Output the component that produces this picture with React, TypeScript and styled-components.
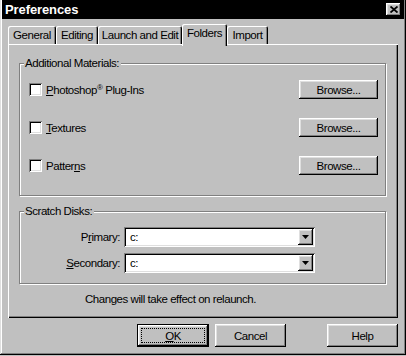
import React from 'react';
import styled, { createGlobalStyle, css } from 'styled-components';

const GlobalStyle = createGlobalStyle`
    html, body {
        margin: 0;
        padding: 0;
        background: #c0c0c0;
    }
    body {
        font-family: "Liberation Sans", Arial, sans-serif;
        font-size: 11.5px;
        letter-spacing: -0.45px;
        color: #000;
    }
`;

const raised = css`
    background: #c0c0c0;
    box-shadow: inset -1px -1px 0 #000, inset 1px 1px 0 #fff, inset -2px -2px 0 #808080, inset 2px 2px 0 #dfdfdf;
`;

const sunken = css`
    box-shadow: inset 1px 1px 0 #808080, inset -1px -1px 0 #fff, inset 2px 2px 0 #000, inset -2px -2px 0 #dfdfdf;
`;

const Window = styled.div`
    box-sizing: border-box;
    width: 406px;
    height: 355px;
    padding: 0 2px 2px 2px;
    background: #c0c0c0;
    box-shadow: inset -1px -1px 0 #000, inset 1px 0 0 #dfdfdf, inset -2px -2px 0 #808080, inset 2px 0 0 #fff;
    display: flex;
    flex-direction: column;
`;

const TitleBar = styled.div`
    height: 19px;
    background: #000;
    display: flex;
    align-items: center;
    padding: 0 3px 0 3px;
`;

const Title = styled.div`
    flex: 1;
    color: #fff;
    font-weight: bold;
    font-size: 13px;
    letter-spacing: -0.1px;
`;

const CloseButton = styled.div`
    width: 15px;
    height: 13px;
    ${raised};
    display: flex;
    align-items: center;
    justify-content: center;
`;

const Body = styled.div`
    padding: 5px 6px 0 6px;
    display: flex;
    flex-direction: column;
`;

const TabStrip = styled.div`
    display: flex;
    align-items: flex-end;
    height: 20px;
    position: relative;
    z-index: 1;
`;

const Tab = styled.div<{ $width: number; $active?: boolean }>`
    box-sizing: border-box;
    width: ${p => p.$width}px;
    height: ${p => (p.$active ? 22 : 18)}px;
    margin-bottom: ${p => (p.$active ? -2 : 0)}px;
    padding-top: 3px;
    background: #c0c0c0;
    border-radius: 2px 2px 0 0;
    box-shadow: inset 1px 1px 0 #fff, inset -1px 0 0 #000, inset -2px 0 0 #808080;
    text-align: center;
    white-space: nowrap;
`;

const Panel = styled.div`
    box-sizing: border-box;
    height: 274px;
    padding: 19px 12px 0 11px;
    background: #c0c0c0;
    box-shadow: inset 1px 1px 0 #fff, inset -1px -1px 0 #000, inset -2px -2px 0 #808080;
    display: flex;
    flex-direction: column;
`;

const GroupBox = styled.div<{ $height: number; $gap?: number }>`
    position: relative;
    box-sizing: border-box;
    height: ${p => p.$height}px;
    margin-top: ${p => p.$gap || 0}px;
    border: 1px solid #808080;
    box-shadow: 1px 1px 0 #fff, inset 1px 1px 0 #fff;
`;

const Legend = styled.span`
    position: absolute;
    top: -8px;
    left: 4px;
    padding: 0 2px 0 1px;
    background: #c0c0c0;
    line-height: 14px;
`;

const MaterialList = styled.div`
    padding: 16px 7px 0 9px;
    display: flex;
    flex-direction: column;
    gap: 19px;
`;

const MaterialRow = styled.div`
    display: flex;
    align-items: center;
    height: 19px;
`;

const Checkbox = styled.span`
    width: 13px;
    height: 13px;
    background: #fff;
    ${sunken};
    margin-right: 4px;
`;

const Key = styled.span`
    text-decoration: underline;
`;

const Reg = styled.sup`
    font-size: 8px;
    vertical-align: 4px;
    line-height: 0;
`;

const PushButton = styled.div<{ $width: number; $height: number; $default?: boolean }>`
    position: relative;
    box-sizing: border-box;
    width: ${p => p.$width}px;
    height: ${p => p.$height}px;
    ${raised};
    display: flex;
    align-items: center;
    justify-content: center;
    ${p =>
        p.$default &&
        css`
            border: 1px solid #000;
            &::after {
                content: "";
                position: absolute;
                inset: 3px;
                border: 1px dotted #000;
            }
        `}
`;

const BrowseButton = styled(PushButton)`
    margin-left: auto;
`;

const DiskGrid = styled.div`
    display: grid;
    grid-template-columns: 100px 191px;
    column-gap: 4px;
    row-gap: 6px;
    padding-top: 15px;
    align-items: center;
`;

const DiskLabel = styled.span`
    text-align: right;
`;

const Combo = styled.div`
    box-sizing: border-box;
    height: 20px;
    padding: 2px;
    background: #fff;
    ${sunken};
    display: flex;
    align-items: center;
`;

const ComboValue = styled.span`
    flex: 1;
    padding-left: 4px;
`;

const ComboArrow = styled.div`
    width: 15px;
    height: 16px;
    ${raised};
    display: flex;
    align-items: center;
    justify-content: center;
`;

const Notice = styled.div`
    margin-top: 9px;
    padding-right: 64px;
    text-align: center;
`;

const ButtonRow = styled.div`
    display: flex;
    gap: 6px;
    margin-top: 6px;
    padding-left: 129px;
`;

const HelpButton = styled(PushButton)`
    margin-left: auto;
`;

const tabs = [
    { label: 'General', width: 48 },
    { label: 'Editing', width: 42 },
    { label: 'Launch and Edit', width: 84 },
    { label: 'Folders', width: 45, active: true },
    { label: 'Import', width: 41 },
];

function Arrow() {
    return (
        <svg width="7" height="4" viewBox="0 0 7 4">
            <path d="M0 0h7L3.5 4z" fill="#000" />
        </svg>
    );
}

export default function App() {
    return (
        <>
            <GlobalStyle />
            <Window>
                <TitleBar>
                    <Title>Preferences</Title>
                    <CloseButton>
                        <svg width="8" height="7" viewBox="0 0 8 7">
                            <path d="M0.5 0.5L7.5 6.5M7.5 0.5L0.5 6.5" stroke="#000" strokeWidth="1.8" />
                        </svg>
                    </CloseButton>
                </TitleBar>

                <Body>
                    <TabStrip>
                        {tabs.map(t => (
                            <Tab key={t.label} $width={t.width} $active={t.active}>
                                {t.label}
                            </Tab>
                        ))}
                    </TabStrip>

                    <Panel>
                        <GroupBox $height={133}>
                            <Legend>Additional Materials:</Legend>
                            <MaterialList>
                                <MaterialRow>
                                    <Checkbox />
                                    <span><Key>P</Key>hotoshop<Reg>®</Reg> Plug-Ins</span>
                                    <BrowseButton $width={79} $height={19}>Browse...</BrowseButton>
                                </MaterialRow>
                                <MaterialRow>
                                    <Checkbox />
                                    <span><Key>T</Key>extures</span>
                                    <BrowseButton $width={79} $height={19}>Browse...</BrowseButton>
                                </MaterialRow>
                                <MaterialRow>
                                    <Checkbox />
                                    <span>Patter<Key>n</Key>s</span>
                                    <BrowseButton $width={79} $height={19}>Browse...</BrowseButton>
                                </MaterialRow>
                            </MaterialList>
                        </GroupBox>

                        <GroupBox $height={73} $gap={15}>
                            <Legend>Scratch Disks:</Legend>
                            <DiskGrid>
                                <DiskLabel>P<Key>r</Key>imary:</DiskLabel>
                                <Combo>
                                    <ComboValue>c:</ComboValue>
                                    <ComboArrow><Arrow /></ComboArrow>
                                </Combo>
                                <DiskLabel><Key>S</Key>econdary:</DiskLabel>
                                <Combo>
                                    <ComboValue>c:</ComboValue>
                                    <ComboArrow><Arrow /></ComboArrow>
                                </Combo>
                            </DiskGrid>
                        </GroupBox>

                        <Notice>Changes will take effect on relaunch.</Notice>
                    </Panel>

                    <ButtonRow>
                        <PushButton $width={72} $height={23} $default><Key>O</Key>K</PushButton>
                        <PushButton $width={71} $height={23}>Cancel</PushButton>
                        <HelpButton $width={71} $height={23}>Help</HelpButton>
                    </ButtonRow>
                </Body>
            </Window>
        </>
    );
}
